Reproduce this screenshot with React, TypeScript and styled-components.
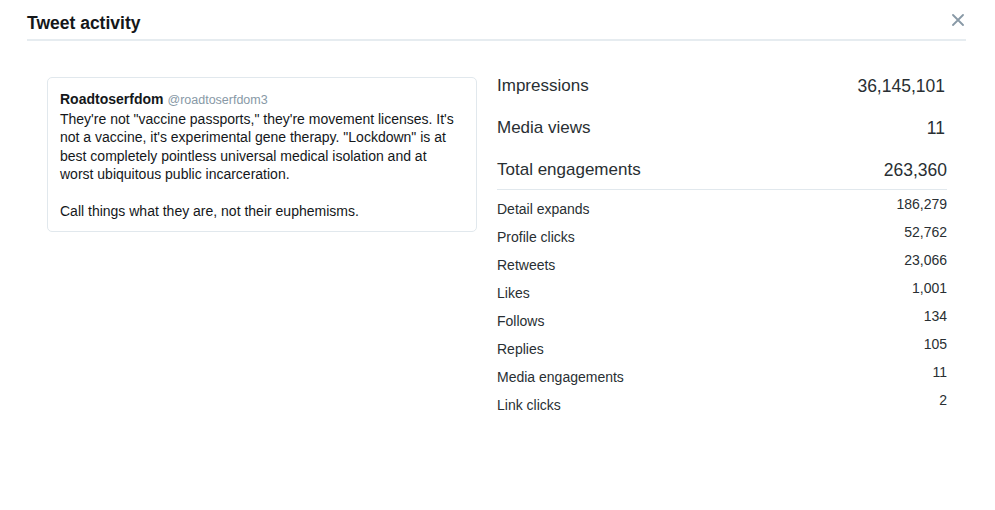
import styled, { createGlobalStyle } from "styled-components"

const GlobalStyle = createGlobalStyle`
    body {
        margin: 0;
        background: #fff;
        font-family: "Liberation Sans", Arial, Helvetica, sans-serif;
        color: #292f33;
    }
`

interface Metric {
    label: string
    value: string
}

const mainMetrics: Metric[] = [
    { label: "Impressions", value: "36,145,101" },
    { label: "Media views", value: "11" },
    { label: "Total engagements", value: "263,360" },
]

const engagementMetrics: Metric[] = [
    { label: "Detail expands", value: "186,279" },
    { label: "Profile clicks", value: "52,762" },
    { label: "Retweets", value: "23,066" },
    { label: "Likes", value: "1,001" },
    { label: "Follows", value: "134" },
    { label: "Replies", value: "105" },
    { label: "Media engagements", value: "11" },
    { label: "Link clicks", value: "2" },
]

// wrapped the way the original card wraps it
const tweetText = `They're not "vaccine passports," they're movement licenses. It's
not a vaccine, it's experimental gene therapy. "Lockdown" is at
best completely pointless universal medical isolation and at
worst ubiquitous public incarceration.`

export default function App() {
    return (
        <>
            <GlobalStyle />
            <Modal>
                <Header>
                    <Title>Tweet activity</Title>
                    <CloseButton aria-label="Close">
                        <svg width="12" height="12" viewBox="0 0 12 12">
                            <path d="M1 1 L11 11 M11 1 L1 11" stroke="#8899a6" strokeWidth="1.8" strokeLinecap="round" />
                        </svg>
                    </CloseButton>
                </Header>
                <Body>
                    <TweetCard>
                        <Author>
                            <strong>Roadtoserfdom</strong>
                            <span>@roadtoserfdom3</span>
                        </Author>
                        <TweetText>{tweetText}</TweetText>
                        <TweetText>Call things what they are, not their euphemisms.</TweetText>
                    </TweetCard>
                    <Metrics>
                        <MainList>
                            {mainMetrics.map(m => (
                                <MainRow key={m.label}>
                                    <span>{m.label}</span>
                                    <MainValue $inset={m.label !== "Total engagements"}>{m.value}</MainValue>
                                </MainRow>
                            ))}
                        </MainList>
                        <SubList>
                            {engagementMetrics.map(m => (
                                <SubRow key={m.label}>
                                    <SubLabel>{m.label}</SubLabel>
                                    <SubValue>{m.value}</SubValue>
                                </SubRow>
                            ))}
                        </SubList>
                    </Metrics>
                </Body>
            </Modal>
        </>
    )
}

const Modal = styled.div`
    width: 995px;
    height: 510px;
    background: #fff;
`

const Header = styled.header`
    display: flex;
    justify-content: space-between;
    align-items: center;
    margin: 0 29px 0 27px;
    padding: 13px 2px 6px 0;
    border-bottom: 2px solid #e6ecf0;
`

const Title = styled.h1`
    margin: 0;
    font-size: 17.5px;
    line-height: 20px;
    font-weight: 700;
    color: #14171a;
`

const CloseButton = styled.button`
    display: flex;
    padding: 0;
    margin-bottom: 7px;
    border: none;
    background: none;
    cursor: pointer;
`

const Body = styled.main`
    display: flex;
    align-items: flex-start;
    gap: 20px;
    padding: 36px 48px 0 47px;
`

const TweetCard = styled.section`
    box-sizing: border-box;
    width: 430px;
    padding: 11px 12px;
    border: 1px solid #e1e8ed;
    border-radius: 5px;
    color: #14171a;
`

const Author = styled.div`
    display: flex;
    align-items: baseline;
    gap: 4px;
    line-height: 20px;

    strong {
        font-size: 14px;
        font-weight: 700;
    }

    span {
        font-size: 12.5px;
        color: #8899a6;
    }
`

const TweetText = styled.p`
    margin: 0;
    font-size: 14px;
    line-height: 18.4px;
    white-space: pre-line;

    & + & {
        margin-top: 18.4px;
    }
`

const Metrics = styled.section`
    flex: 1;
    margin-top: -1px;
`

const MainList = styled.div`
    display: flex;
    flex-direction: column;
    gap: 22px;
    padding-bottom: 9px;
    border-bottom: 1px solid #e1e8ed;
`

const MainRow = styled.div`
    display: flex;
    justify-content: space-between;
    font-size: 17px;
    line-height: 20px;
    color: #292f33;
`

const MainValue = styled.span<{ $inset?: boolean }>`
    font-size: 17.5px;
    padding-right: ${p => (p.$inset ? 2 : 0)}px;
`

const SubList = styled.div`
    display: flex;
    flex-direction: column;
`

const SubRow = styled.div`
    display: flex;
    justify-content: space-between;
    align-items: flex-start;
    height: 28px;
    font-size: 14px;
    line-height: 18px;
    color: #292f33;
`

const SubLabel = styled.span`
    padding-top: 10px;
`

const SubValue = styled.span`
    padding-top: 5px;
`
